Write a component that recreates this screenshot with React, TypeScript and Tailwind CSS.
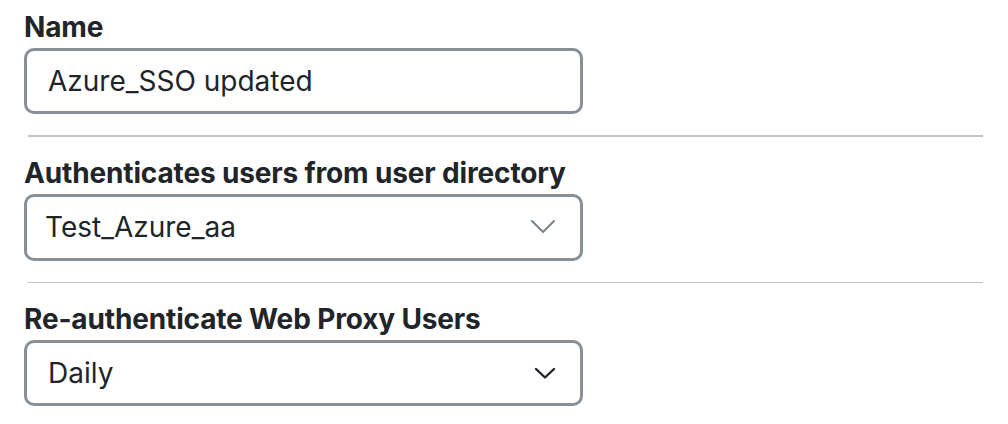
import React from 'react';

const Chevron: React.FC<{ dark?: boolean }> = ({ dark }) =>
    dark ? (
        <svg width="22" height="14" viewBox="0 0 22 14" fill="none">
            <polyline points="2,3 11,11.5 20,3" stroke="#212529" strokeWidth="2.4" strokeLinecap="round" strokeLinejoin="round" />
        </svg>
    ) : (
        <svg width="26" height="18" viewBox="0 0 26 18" fill="none">
            <polyline points="2,3 13,14 24,3" stroke="#7b838b" strokeWidth="2" strokeLinecap="round" strokeLinejoin="round" />
        </svg>
    );

const Label: React.FC<{ children: React.ReactNode }> = ({ children }) => (
    <div className="h-[32px] leading-[32px] text-[28px] font-bold text-[#212529] mb-[5px] tracking-[-0.15px]">{children}</div>
);

const Divider = () => <div className="ml-[4px] w-[955px] h-[1.5px] bg-[#c9c2c3] mt-[21px] mb-[20px]" />;

const App: React.FC = () => {
    return (
        <div className="w-[1008px] h-[424px] bg-white pt-[11px] pl-[24px] overflow-hidden" style={{ fontFamily: 'Inter, "Noto Sans", sans-serif' }}>
            {/* Name */}
            <Label>Name</Label>
            <div className="w-[559px] h-[66px] border-[3px] border-[#879098] rounded-[10px] flex items-center pl-[21px] text-[28px] text-[#212529]">
                Azure_SSO updated
            </div>

            <Divider />

            {/* User directory */}
            <Label>Authenticates users from user directory</Label>
            <div className="w-[559px] h-[67px] border-[3px] border-[#879098] rounded-[10px] flex items-center justify-between pl-[18px] pr-[24px] text-[28px] text-[#212529]">
                <span>Test_Azure_aa</span>
                <Chevron />
            </div>

            <Divider />

            {/* Re-auth */}
            <Label>Re-authenticate Web Proxy Users</Label>
            <div className="w-[559px] h-[66px] border-[3px] border-[#879098] rounded-[10px] flex items-center justify-between pl-[21px] pr-[24px] text-[28px] text-[#212529]">
                <span>Daily</span>
                <Chevron dark />
            </div>
        </div>
    );
};

export default App;
